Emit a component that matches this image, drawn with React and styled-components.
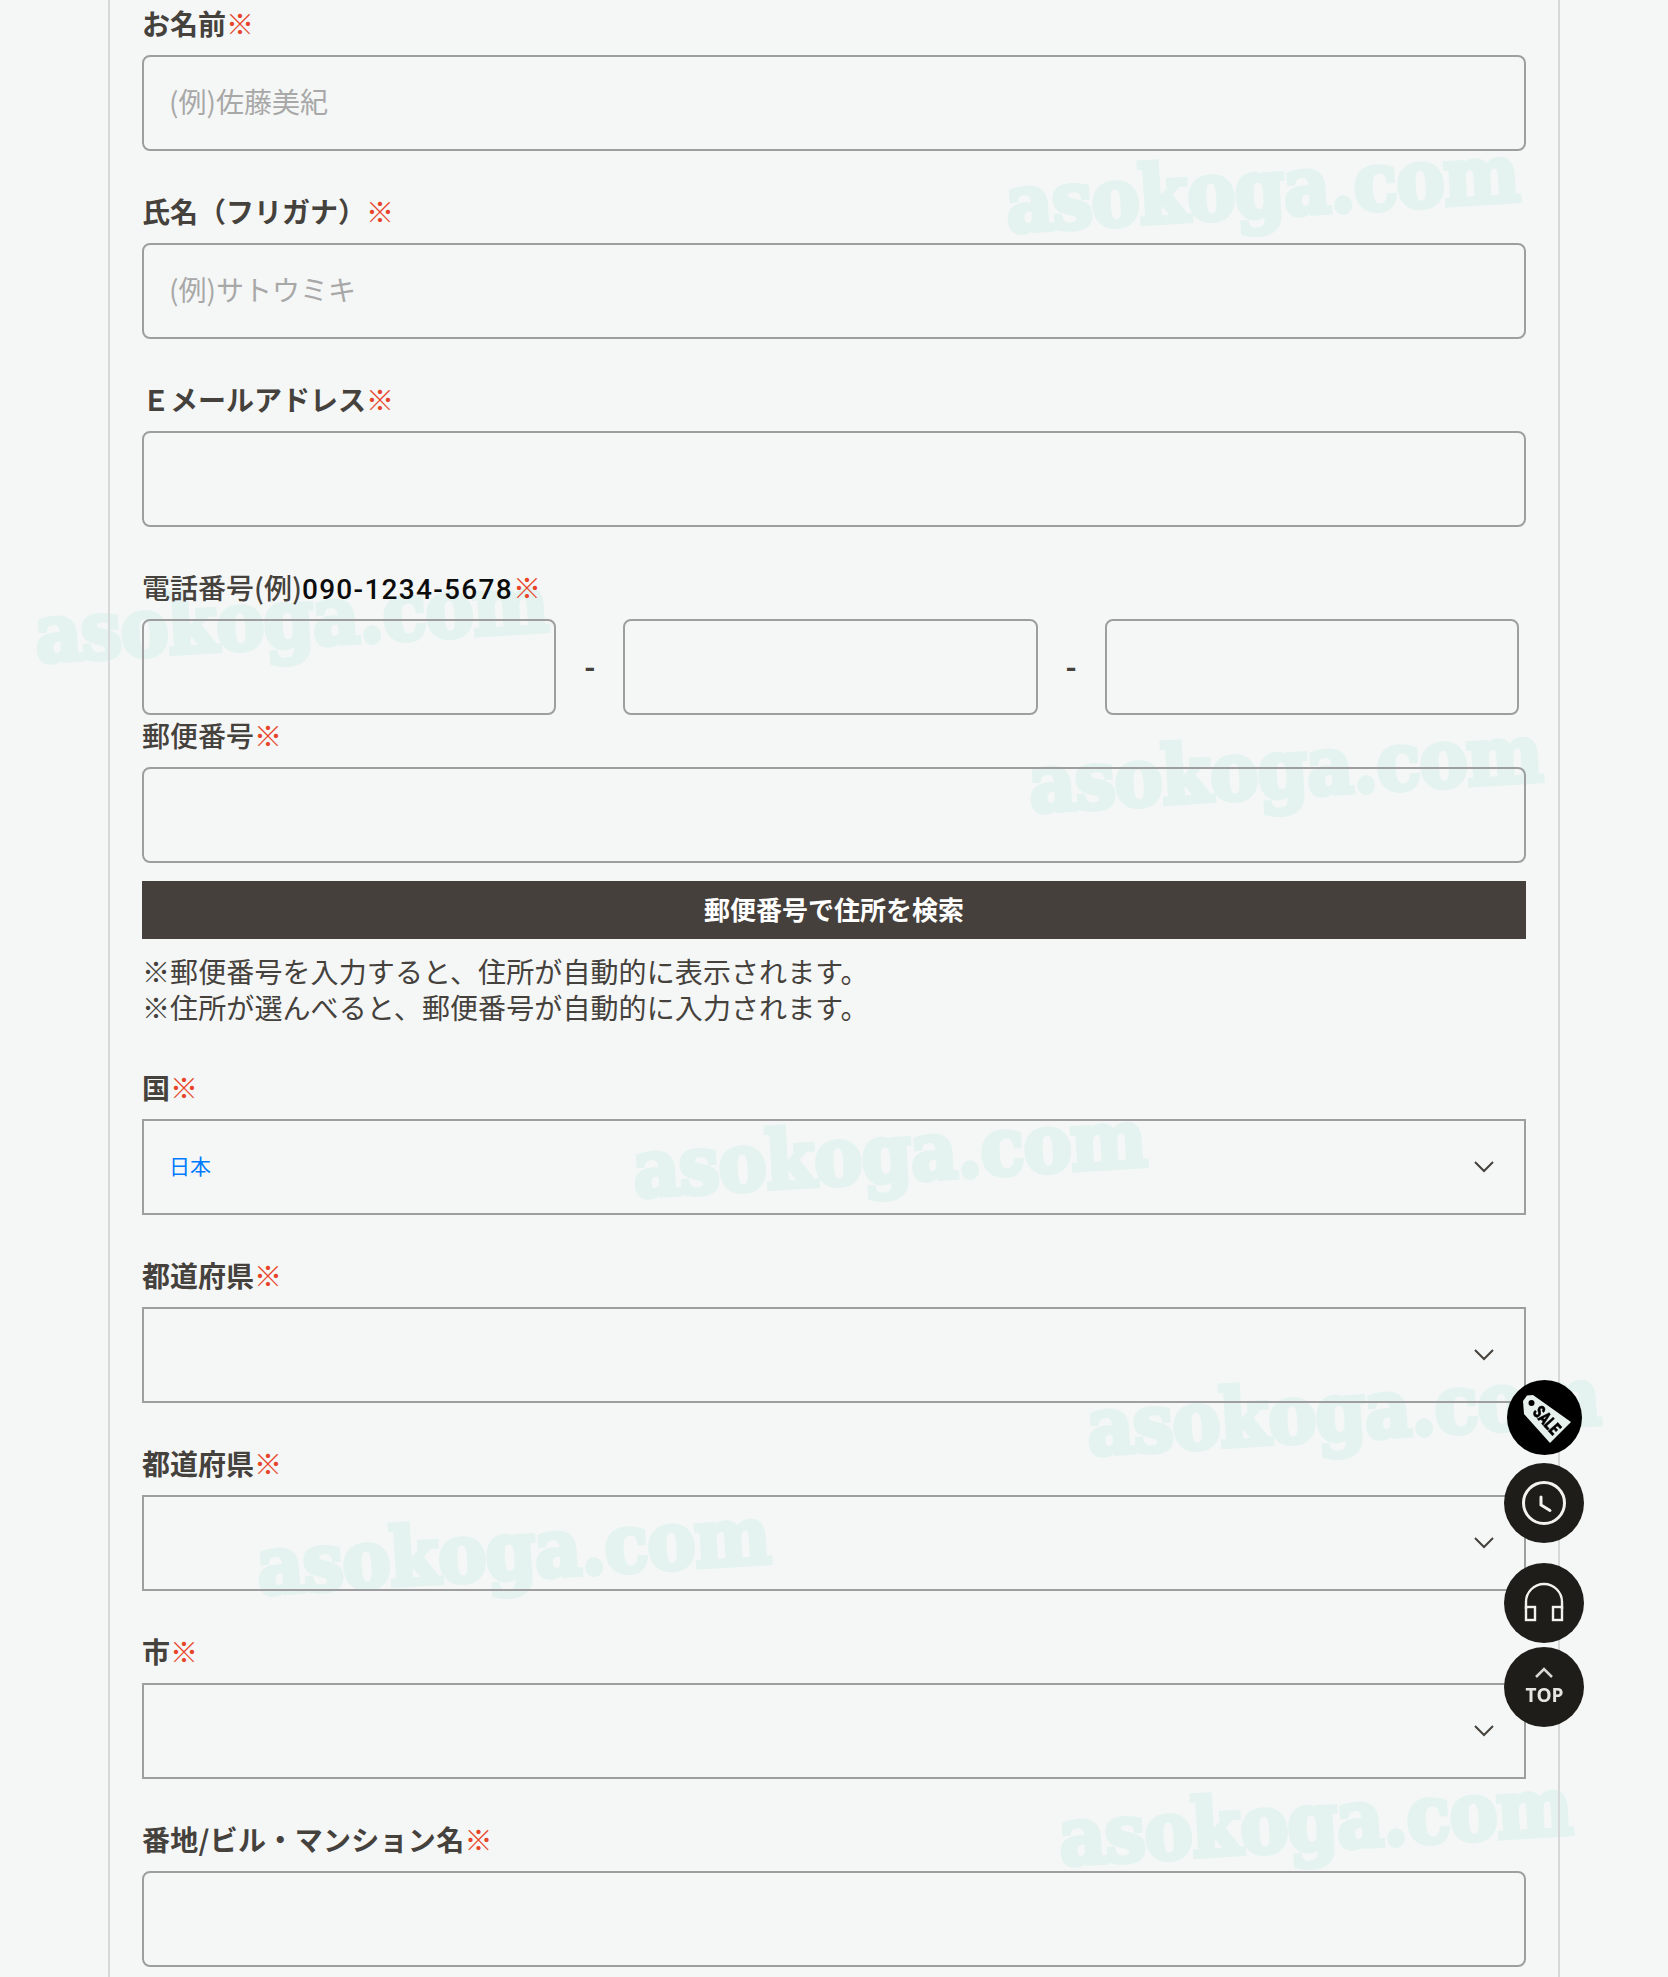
import React from 'react';
import styled, { createGlobalStyle } from 'styled-components';

const GlobalStyle = createGlobalStyle`
  html, body {
    margin: 0;
    height: 1977px;
    overflow: hidden;
    background: #f5f7f6;
    font-family: "Noto Sans CJK JP", "Liberation Sans", sans-serif;
    color: #45413c;
  }
`;

/* page frame */
const Page = styled.div`
  position: relative;
  height: 1977px;
  overflow: hidden;
  padding: 0 108px;
  box-sizing: border-box;
`;

const Panel = styled.main`
  position: relative;
  z-index: 1;
  height: 100%;
  box-sizing: border-box;
  padding: 4px 32px 0 32px;
  border-left: 2px solid #d6d9d7;
  border-right: 2px solid #d6d9d7;
`;

const Watermark = styled.div`
  position: absolute;
  left: ${(p) => p.$x}px;
  top: ${(p) => p.$y}px;
  z-index: 0;
  font-family: "DejaVu Serif", serif;
  font-weight: 700;
  font-size: 80px;
  line-height: 90px;
  letter-spacing: -1px;
  color: #e4f3f0;
  -webkit-text-stroke: 5px #e4f3f0;
  transform-origin: left center;
  transform: rotate(-3.5deg) scaleX(0.9);
  white-space: nowrap;
  pointer-events: none;
`;

/* form parts */
const Field = styled.div`
  margin-bottom: ${(p) => p.$gap ?? 41}px;
`;

const Label = styled.label`
  display: block;
  height: 40px;
  margin-bottom: 11px;
  font-size: 28px;
  line-height: 38px;
  letter-spacing: ${(p) => p.$track ?? 0}px;
  white-space: nowrap;
  color: #45413c;
  font-weight: ${(p) => (p.$light ? 500 : 700)};
`;

const Required = styled.span`
  color: #e8442a;
  font-weight: 400;
`;

const Digits = styled.span`
  font-family: Roboto, "Liberation Sans", sans-serif;
  font-weight: 500;
  letter-spacing: 1.3px;
  color: #0c0c0c;
`;

const TextInput = styled.input`
  display: block;
  width: 100%;
  height: 96px;
  box-sizing: border-box;
  padding: 0 25px 4px;
  border: 2px solid #9e9e9e;
  border-radius: 8px;
  background: transparent;
  font-family: inherit;
  font-size: 28px;
  color: #45413c;
  outline: none;

  &::placeholder {
    color: #a8a8a8;
    opacity: 1;
  }
`;

const PhoneRow = styled.div`
  display: flex;
  align-items: center;
  width: 1377px;
`;

const PhoneInput = styled(TextInput)`
  flex: 1 1 0;
  width: 0;
`;

const Dash = styled.span`
  flex: 0 0 67px;
  padding-bottom: 4px;
  text-align: center;
  font-size: 30px;
  font-weight: 700;
`;

const SearchButton = styled.button`
  display: block;
  width: 100%;
  height: 58px;
  margin-top: 18px;
  padding: 0 0 4px;
  border: 0;
  background: #45403c;
  color: #fff;
  font-family: inherit;
  font-size: 26px;
  font-weight: 700;
`;

const Note = styled.p`
  margin: 14px 0 43px;
  font-size: 28px;
  line-height: 36px;
  letter-spacing: 0.1px;
  font-weight: 400;
  white-space: nowrap;
`;

const SelectWrap = styled.div`
  position: relative;
  height: 96px;
`;

const Select = styled.select`
  display: block;
  width: 100%;
  height: 100%;
  box-sizing: border-box;
  padding: 0 25px 4px;
  appearance: none;
  border: 2px solid #9e9e9e;
  border-radius: 0;
  background: transparent;
  font-family: inherit;
  font-size: 21px;
  color: #007aff;
`;

const Chevron = styled.svg`
  position: absolute;
  right: 31px;
  top: 41px;
  width: 22px;
  height: 14px;
  pointer-events: none;
`;

/* floating buttons */
const FloatStack = styled.aside`
  position: fixed;
  z-index: 5;
  top: 1380px;
  right: 84px;
  display: flex;
  flex-direction: column;
  align-items: center;
`;

const RoundButton = styled.button`
  display: flex;
  flex-direction: column;
  align-items: center;
  justify-content: center;
  width: ${(p) => p.$size ?? 80}px;
  height: ${(p) => p.$size ?? 80}px;
  margin-top: ${(p) => p.$top ?? 0}px;
  padding: 0;
  border: 0;
  border-radius: 50%;
  background: ${(p) => p.$bg ?? '#1f1d1a'};
  color: #e6e5e1;
`;

const TopText = styled.span`
  font-family: "Open Sans", "Liberation Sans", sans-serif;
  font-size: 19px;
  line-height: 18px;
  font-weight: 700;
  margin: 7px 0 4px 1px;
`;

const ChevronDown = () => (
  <Chevron viewBox="0 0 22 14" fill="none" stroke="#45413c" strokeWidth="2">
    <path d="M2 2l9 9 9-9" />
  </Chevron>
);

const SaleIcon = () => (
  <svg width="75" height="75" viewBox="0 0 75 75">
    <path d="M20 15.5L26 15L64 42L43 63L17 34L16 21Z" fill="#e6f1ee" />
    <circle cx="24.5" cy="23" r="3" fill="#000" />
    <text
      x="40"
      y="46.5"
      transform="rotate(48 40 40)"
      textAnchor="middle"
      fontFamily="Roboto, sans-serif"
      fontWeight="900"
      fontSize="18"
      textLength="31"
      lengthAdjust="spacingAndGlyphs"
      stroke="#000"
      strokeWidth="0.5"
      fill="#000"
    >
      SALE
    </text>
  </svg>
);

const ClockIcon = () => (
  <svg width="80" height="80" viewBox="-40 -40 80 80" fill="none" stroke="#f3f2ee" strokeWidth="3">
    <circle r="20.5" />
    <path d="M-3-6V2L6 7.5" strokeLinecap="round" />
  </svg>
);

const HeadphoneIcon = () => (
  <svg width="80" height="80" viewBox="-40 -40 80 80" fill="none" stroke="#f3f2ee" strokeWidth="2.4">
    <path d="M-18 6V-1A18 18 0 0 1 18-1V6" />
    <rect x="-18" y="4" width="9" height="13" />
    <rect x="9" y="4" width="9" height="13" />
  </svg>
);

const TopArrow = () => (
  <svg width="20" height="12" viewBox="0 0 20 12" fill="none" stroke="#d9d8d4" strokeWidth="2.5">
    <path d="M2 10l8-8 8 8" />
  </svg>
);

const marks = [
  [1006, 159],
  [35, 589],
  [1029, 739],
  [633, 1124],
  [1087, 1382],
  [257, 1521],
  [1059, 1792],
];

const RequiredMark = () => <Required>※</Required>;

const SelectField = ({ title, value }) => (
  <Field>
    <Label>
      {title}
      <RequiredMark />
    </Label>
    <SelectWrap>
      <Select defaultValue={value ?? ''}>
        <option value={value ?? ''}>{value ?? ''}</option>
      </Select>
      <ChevronDown />
    </SelectWrap>
  </Field>
);

export default function App() {
  return (
    <>
      <GlobalStyle />
      <Page>
        {marks.map(([x, y]) => (
          <Watermark key={x} $x={x} $y={y}>
            asokoga.com
          </Watermark>
        ))}
        <Panel>
          <Field>
            <Label>
              お名前
              <RequiredMark />
            </Label>
            <TextInput placeholder="(例)佐藤美紀" />
          </Field>
          <Field>
            <Label>
              氏名（フリガナ）
              <RequiredMark />
            </Label>
            <TextInput placeholder="(例)サトウミキ" />
          </Field>
          <Field>
            <Label>
              Ｅメールアドレス
              <RequiredMark />
            </Label>
            <TextInput />
          </Field>
          <Field $gap={1}>
            <Label $light>
              電話番号(例)<Digits>090-1234-5678</Digits>
              <RequiredMark />
            </Label>
            <PhoneRow>
              <PhoneInput />
              <Dash>-</Dash>
              <PhoneInput />
              <Dash>-</Dash>
              <PhoneInput />
            </PhoneRow>
          </Field>
          <Field $gap={0}>
            <Label $light>
              郵便番号
              <RequiredMark />
            </Label>
            <TextInput />
            <SearchButton>郵便番号で住所を検索</SearchButton>
          </Field>
          <Note>
            ※郵便番号を入力すると、住所が自動的に表示されます。
            <br />
            ※住所が選んべると、郵便番号が自動的に入力されます。
          </Note>
          <SelectField title="国" value="日本" />
          <SelectField title="都道府県" />
          <SelectField title="都道府県" />
          <SelectField title="市" />
          <Field>
            <Label $track={0.3}>
              番地/ビル・マンション名
              <RequiredMark />
            </Label>
            <TextInput />
          </Field>
        </Panel>
        <FloatStack>
          <RoundButton $size={75} $bg="#000">
            <SaleIcon />
          </RoundButton>
          <RoundButton $top={8}>
            <ClockIcon />
          </RoundButton>
          <RoundButton $top={20}>
            <HeadphoneIcon />
          </RoundButton>
          <RoundButton $top={4}>
            <TopArrow />
            <TopText>TOP</TopText>
          </RoundButton>
        </FloatStack>
      </Page>
    </>
  );
}
